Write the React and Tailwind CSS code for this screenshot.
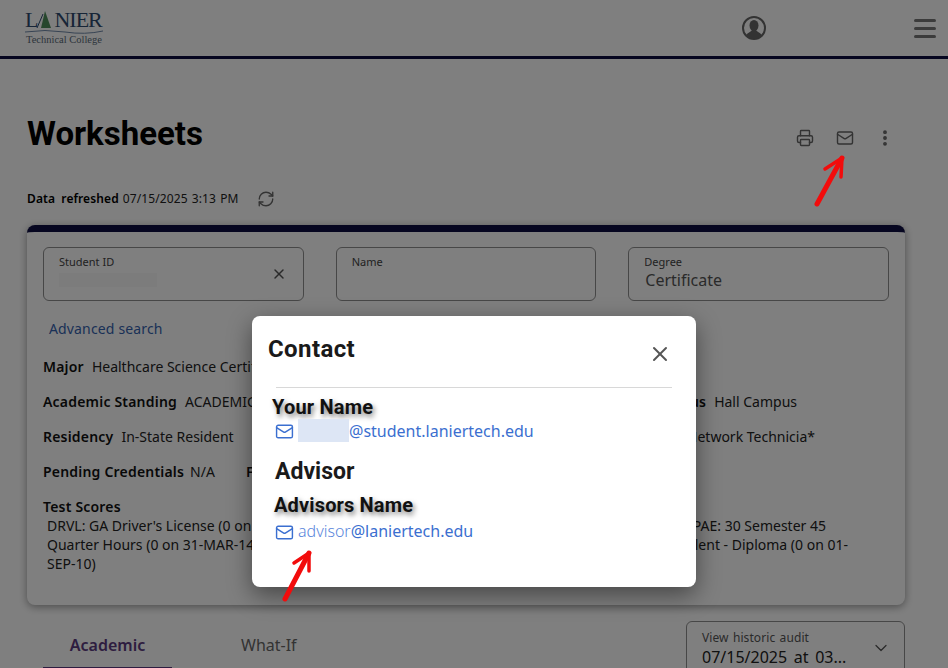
import { Mail, Printer, RefreshCw, X, ChevronDown, EllipsisVertical } from "lucide-react";

function Field({ label, value, children, blur }) {
  return (
    <div className="relative h-[54px] rounded-[6px] border border-[#8e8e8e] px-[15px] pt-[6px]">
      <div className="text-[11px] leading-[16px] text-[#444]">{label}</div>
      {value && <div className="ml-px text-[16px] leading-[21px] text-[#555]">{value}</div>}
      {blur && <div className={`mt-[3px] h-[14px] bg-[#f9f9f9] ${blur}`} />}
      {children}
    </div>
  );
}

function Info({ label, value }) {
  return (
    <span>
      <b className="font-semibold tracking-[0.2px] text-[#111]">{label}</b>
      <span className="ml-[8px]">{value}</span>
    </span>
  );
}

function Arrow({ className, tail, tip, left, right }) {
  return (
    <svg className={className} viewBox="0 0 948 668" fill="none" stroke="#f20c0c" strokeLinecap="round" strokeLinejoin="round">
      <path d={`M${tail} L${tip}`} strokeWidth="5" />
      <path d={`M${left} L${tip} L${right}`} strokeWidth="3.5" />
    </svg>
  );
}

export default function App() {
  return (
    <div className="relative h-[668px] w-[948px] overflow-hidden bg-white font-['Noto_Sans',sans-serif] text-[14px] text-[#222]">
      <header className="flex h-[59px] items-center justify-between border-b-[3px] border-[#0c0c40] pl-[25px] pr-[12px]">
        <div className="relative w-[80px] font-['Liberation_Serif',serif] text-[#2e4a6e]">
          <div className="flex h-[19px] items-end text-[22px] leading-[19px] tracking-[-1px]">
            <span>L</span>
            <span className="ml-[17px]">NIER</span>
          </div>
          <svg width="17" height="18" viewBox="0 0 17 18" className="absolute left-[11px] top-[1px]">
            <path d="M9 0 L15 17 L5 17 Z" fill="#4f8f5a" />
            <path d="M7 3 L1 17" stroke="#2e4a6e" strokeWidth="1" />
          </svg>
          <svg width="78" height="5" viewBox="0 0 78 5" className="block">
            <path d="M0 3 Q20 0 40 3 T78 2" stroke="#6f88a8" strokeWidth="1" fill="none" />
          </svg>
          <div className="ml-px text-[10.5px] leading-[12px] whitespace-nowrap text-[#5a6a78]">Technical College</div>
        </div>
        <div className="flex items-center">
          <svg width="26" height="26" viewBox="0 0 26 26" className="mr-[147px]">
            <defs>
              <clipPath id="c"><circle cx="13" cy="13" r="10.5" /></clipPath>
            </defs>
            <circle cx="13" cy="13" r="11" fill="none" stroke="#666" strokeWidth="2" />
            <g clipPath="url(#c)" fill="#666">
              <ellipse cx="13" cy="10.5" rx="4.5" ry="5.5" />
              <path d="M3 25 C4 18 9 18 11 15 L15 15 C17 18 22 18 23 25 Z" />
            </g>
          </svg>
          <div className="flex w-[22px] flex-col gap-[5px]">
            <div className="h-[3px] rounded-full bg-[#777]" />
            <div className="h-[3px] rounded-full bg-[#777]" />
            <div className="h-[3px] rounded-full bg-[#777]" />
          </div>
        </div>
      </header>

      <main className="pl-[27px] pr-[43px]">
        <div className="flex items-start justify-between pt-[56px]">
          <h1 className="font-['Roboto',sans-serif] text-[33px] leading-[38px] font-bold text-black">Worksheets</h1>
          <div className="mr-[10px] mt-[13px] flex items-center text-[#666]">
            <Printer size={18} strokeWidth={1.9} />
            <Mail size={18} strokeWidth={1.9} className="ml-[22px]" />
            <EllipsisVertical size={20} strokeWidth={2.6} className="ml-[21px]" />
          </div>
        </div>

        <div className="mt-[34px] flex h-[24px] items-center text-[12px] tracking-[0.1px] [word-spacing:1px]">
          <b className="font-semibold text-black [word-spacing:3px]">Data refreshed</b>
          <span className="ml-[4px]">07/15/2025 3:13 PM</span>
          <RefreshCw size={18} strokeWidth={1.8} className="ml-[18px] text-[#666]" />
        </div>

        <section className="mt-[14px] h-[380px] rounded-[8px] border-t-[7px] border-[#0c0c40] bg-white px-4 pt-[15px] shadow-[0_2px_8px_rgba(0,0,0,0.4)]">
          <div className="grid grid-cols-3 gap-8">
            <Field label="Student ID" blur="w-[98px]">
              <X size={16} strokeWidth={2.2} className="absolute right-[16px] top-[18px] text-[#555]" />
            </Field>
            <Field label="Name" />
            <Field label="Degree" value="Certificate" />
          </div>

          <div className="mt-[18px] ml-[6px] leading-[20px] tracking-[0.15px] text-[#3562ae]">Advanced search</div>

          <div className="mt-[18px] flex h-[20px] leading-[20px]"><Info label="Major" value="Healthcare Science Certificate" /></div>
          <div className="mt-[15px] flex h-[20px] justify-between leading-[20px]">
            <Info label="Academic Standing" value="ACADEMIC GOOD STANDING" />
            <span className="mr-[92px]"><Info label="Campus" value="Hall Campus" /></span>
          </div>
          <div className="mt-[15px] flex h-[20px] justify-between leading-[20px]">
            <Info label="Residency" value="In-State Resident" />
            <span className="mr-[74px]"><Info label="Minor" value="Network Technicia*" /></span>
          </div>
          <div className="mt-[15px] flex h-[20px] gap-[31px] leading-[20px]">
            <span>
              <b className="font-semibold tracking-[0.2px] text-[#111]">Pending Credentials</b>
              <span className="ml-[6px]">N/A</span>
            </span>
            <b className="font-semibold text-[#111]">Financial Aid</b>
          </div>
          <div className="mt-[15px] leading-[19px] font-semibold tracking-[0.2px] text-[#111]">Test Scores</div>
          <div className="ml-[4px] leading-[19px]">
            <div className="flex justify-between pr-[63px]"><span>DRVL: GA Driver's License (0 on 31-MAR-14)</span><span>PAE: 30 Semester 45</span></div>
            <div className="flex justify-between pr-[41px]"><span>Quarter Hours (0 on 31-MAR-14)</span><span>lent - Diploma (0 on 01-</span></div>
            <div>SEP-10)</div>
          </div>
        </section>

        <div className="mt-[16px] flex items-start justify-between pl-[16px]">
          <div className="flex">
            <div className="h-[48px] w-[129px] border-b-[2px] border-[#5c3a80] pt-[13px] text-center text-[16px] leading-[22px] font-semibold text-[#5c3a80]">Academic</div>
            <div className="ml-[69px] pt-[13px] text-[16px] leading-[22px] text-[#666]">What-If</div>
          </div>
          <div className="relative h-[60px] w-[219px] rounded-[6px] border border-[#8e8e8e] px-[15px] pt-[8px]">
            <div className="text-[12px] leading-[16px] tracking-[0.1px] text-[#555] [word-spacing:1px]">View historic audit</div>
            <div className="text-[16px] leading-[22px] whitespace-nowrap text-[#222] [word-spacing:2.5px]">07/15/2025 at 03...</div>
            <ChevronDown size={20} strokeWidth={1.5} className="absolute right-[13px] top-[16px] text-[#555]" />
          </div>
        </div>
      </main>

      <div className="absolute inset-0 bg-black/50" />

      <div className="absolute left-[252px] top-[316px] h-[271px] w-[444px] rounded-[8px] bg-white shadow-[0_8px_24px_rgba(0,0,0,0.45)]">
        <div className="flex items-start justify-between pl-[16px] pr-[24px] pt-[18px]">
          <h2 className="font-['Roboto',sans-serif] text-[24px] leading-[30px] font-bold tracking-[0.4px] text-[#1a1a1a]">Contact</h2>
          <X size={24} strokeWidth={2} className="mt-[8px] text-[#555]" />
        </div>
        <div className="mx-[24px] mt-[21px] h-px bg-[#d8d8d8]" />
        <div className="font-['Roboto',sans-serif] text-[#111]">
          <div className="ml-[20px] mt-[7px] text-[20px] leading-[24px] font-bold tracking-[0.2px] [text-shadow:2px_3px_5px_rgba(0,0,0,0.5)]">Your Name</div>
          <div className="ml-[24px] flex h-[23px] items-center font-['Noto_Sans',sans-serif] text-[16px] text-[#3b6fd0]">
            <Mail size={19} strokeWidth={1.8} className="mt-[2px] -ml-[1px]" />
            <span className="ml-[4px] h-[23px] w-[51px] bg-[#dde6f5]" />
            <span>@student.laniertech.edu</span>
          </div>
          <div className="ml-[23px] mt-[16px] text-[23px] leading-[28px] font-bold text-[#1a1a1a]">Advisor</div>
          <div className="ml-[22px] mt-[7px] text-[20px] leading-[24px] font-bold tracking-[0.15px] [text-shadow:2px_3px_5px_rgba(0,0,0,0.5)]">Advisors Name</div>
          <div className="ml-[24px] mt-[3px] flex h-[22px] items-center font-['Noto_Sans',sans-serif] text-[16px] text-[#3b6fd0]">
            <Mail size={19} strokeWidth={1.8} className="mt-[2px] -ml-[1px]" />
            <span className="ml-[4px] font-light text-[#5a86dc]">advisor</span>
            <span>@laniertech.edu</span>
          </div>
        </div>
      </div>

      <Arrow className="pointer-events-none absolute inset-0 h-[668px] w-[948px]" tail="817,204" tip="842,158" left="825,169" right="841,177" />
      <Arrow className="pointer-events-none absolute inset-0 h-[668px] w-[948px]" tail="285,599" tip="309,553" left="294,563" right="309,571" />
    </div>
  );
}
